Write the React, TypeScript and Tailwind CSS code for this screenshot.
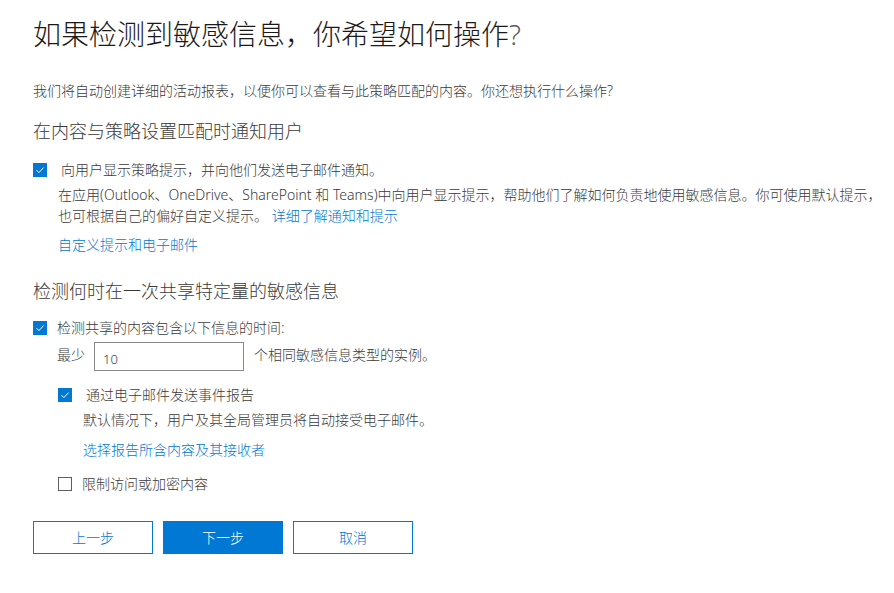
import React from "react";

const font = { fontFamily: '"Noto Sans", "Noto Sans CJK SC", sans-serif' };

function Check({ checked }: { checked: boolean }) {
  return checked ? (
    <span className="flex h-[14px] w-[14px] shrink-0 items-center justify-center bg-[#0078d4]">
      <svg width="14" height="14" viewBox="0 0 14 14" fill="none">
        <path d="M3.5 7.2 L5.9 9.6 L10.6 4.6" stroke="white" strokeWidth="1" />
      </svg>
    </span>
  ) : (
    <span className="block h-[14px] w-[14px] shrink-0 border border-[#605e5c] bg-white" />
  );
}

export default function App() {
  return (
    <div
      className="h-[593px] w-[894px] overflow-hidden bg-white text-[14px] font-light leading-[20px] text-[#3b3a39]"
      style={font}
    >
      <div className="flex flex-col pl-[33px] pt-[14px]">
        <h1 className="whitespace-nowrap text-[28px] font-light leading-[40px] text-[#1b1a19]">
          如果检测到敏感信息，你希望如何操作<span className="text-[#605e5c]">?</span>
        </h1>
        <p className="mt-[27px] whitespace-nowrap">
          我们将自动创建详细的活动报表，以便你可以查看与此策略匹配的内容。你还想执行什么操作?
        </p>
        <h2 className="mt-[17px] text-[18px] font-light leading-[26px]">在内容与策略设置匹配时通知用户</h2>

        <div className="mt-[16px] flex items-center gap-[14px]">
          <Check checked />
          <span>向用户显示策略提示，并向他们发送电子邮件通知。</span>
        </div>
        <div className="ml-[25px] mt-[4px] whitespace-nowrap leading-[21px]">
          在应用(Outlook、OneDrive、SharePoint 和 Teams)中向用户显示提示，帮助他们了解如何负责地使用敏感信息。你可使用默认提示，
          <br />
          也可根据自己的偏好自定义提示。 <span className="text-[#0078d4]">详细了解通知和提示</span>
        </div>
        <div className="ml-[25px] mt-[9px] text-[#0078d4]">自定义提示和电子邮件</div>

        <h2 className="mt-[23px] text-[18px] font-light leading-[26px]">检测何时在一次共享特定量的敏感信息</h2>

        <div className="mt-[14px] flex items-center gap-[10px]">
          <Check checked />
          <span>检测共享的内容包含以下信息的时间:</span>
        </div>
        <div className="ml-[24px] mt-[7px] flex items-start">
          <span>最少</span>
          <div className="ml-[9px] mt-[-3px] flex h-[29px] w-[150px] items-center border border-[#8a8886] px-[8px] pt-[4px] text-[13px]">
            10
          </div>
          <span className="ml-[10px]">个相同敏感信息类型的实例。</span>
        </div>

        <div className="ml-[25px] mt-[14px] flex items-center gap-[14px]">
          <Check checked />
          <span>通过电子邮件发送事件报告</span>
        </div>
        <div className="ml-[50px] mt-[5px]">默认情况下，用户及其全局管理员将自动接受电子邮件。</div>
        <div className="ml-[50px] mt-[10px] text-[#0078d4]">选择报告所含内容及其接收者</div>

        <div className="ml-[25px] mt-[14px] flex items-center gap-[10px]">
          <Check checked={false} />
          <span>限制访问或加密内容</span>
        </div>

        <div className="mt-[27px] flex gap-[10px]">
          <button className="h-[33px] w-[120px] border border-[#0078d4] bg-white text-[#0078d4]">上一步</button>
          <button className="h-[33px] w-[120px] border border-[#0078d4] bg-[#0078d4] text-white">下一步</button>
          <button className="h-[33px] w-[120px] border border-[#0078d4] bg-white text-[#0078d4]">取消</button>
        </div>
      </div>
    </div>
  );
}
